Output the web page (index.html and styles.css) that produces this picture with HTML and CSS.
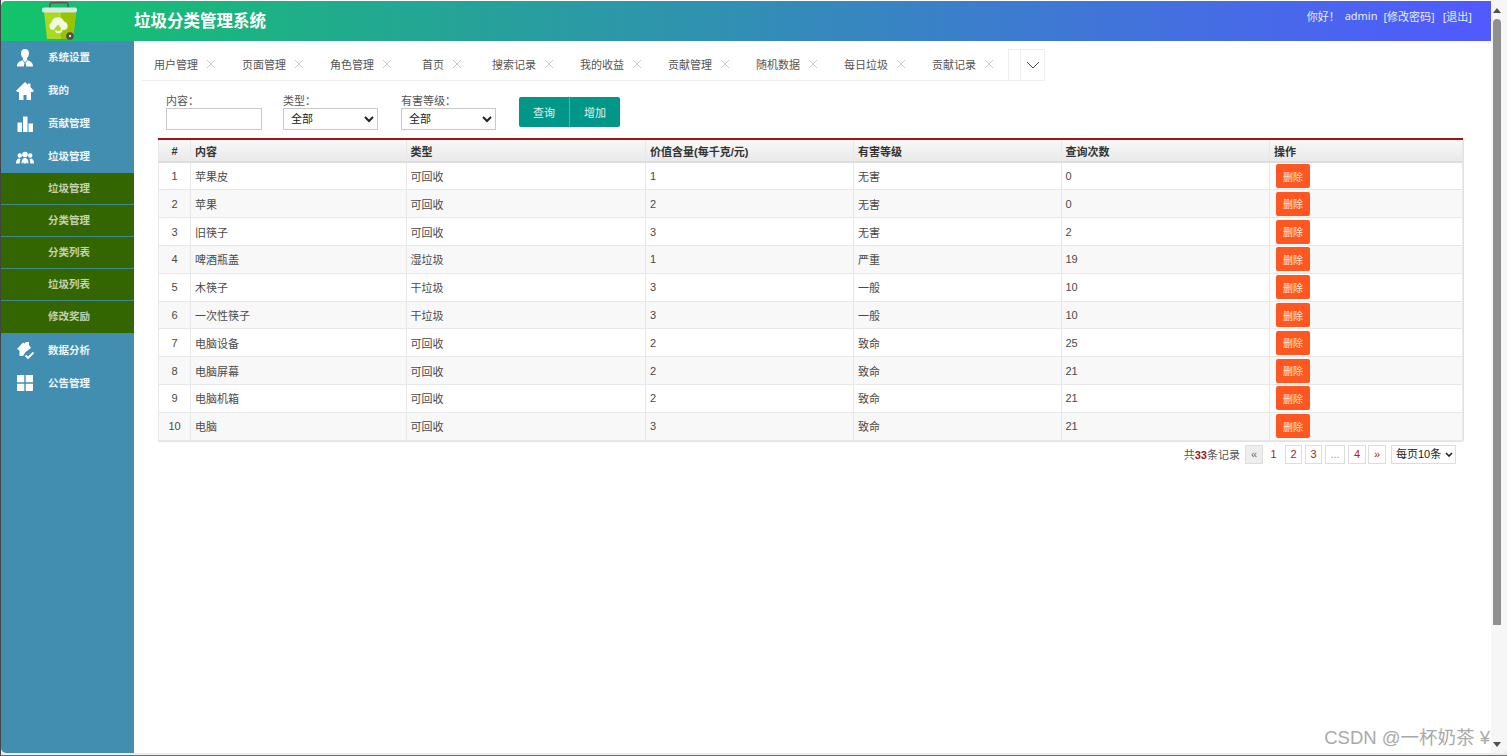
FILE: index.html
```html
<!DOCTYPE html>
<html lang="zh">
<head>
<meta charset="utf-8">
<title>垃圾分类管理系统</title>
<link rel="stylesheet" href="styles.css">
</head>
<body>
<div class="window">
  <div class="page">
    <header class="topbar">
      <div class="logo-cell">
        <svg class="logo" viewBox="0 0 40 40" width="40" height="40">
          <path d="M9 7V3.500Q9 1.800 11 1.800H25Q27 1.800 27 3.500V7" fill="none" stroke="#5d5748" stroke-width="1.500"/>
          <path d="M3 11H35L32 38H6Z" fill="#a9d920"/>
          <path d="M20 11H35L32 38H20Z" fill="#98c300"/>
          <rect x="1" y="6.500" width="35" height="5" rx="2" fill="#d6ece6"/>
          <path d="M11.500 29a4 4 0 0 1-1-7.500a6.500 6.500 0 0 1 12.500-1a4.500 4.500 0 0 1 1 8.500h-2.500l-4.500-5.500-4.500 5.500z" fill="#f2f8e2"/>
          <path d="M14.500 29.500a3.600 3.600 0 0 0 6 .5M20.500 27.500v3h-3" fill="none" stroke="#f2f8e2" stroke-width="1.700"/>
          <circle cx="29" cy="35" r="3.800" fill="#514d3f"/>
          <circle cx="29" cy="35" r="1.200" fill="#ddd"/>
        </svg>
      </div>
      <h1 class="brand">垃圾分类管理系统</h1>
      <div class="user-links"><span>你好！</span><span>admin</span><span class="link-pwd">[修改密码]</span><span class="link-exit">[退出]</span></div>
    </header>
    <div class="body-row">
      <nav class="sidebar">
        <a class="nav-item"><svg class="nav-icon" viewBox="0 0 20 20"><path d="M10 1c2.800 0 4 2 4 4.200c0 2-1 4-2.200 5l.5 1.300L10 14.500 7.700 11.500l.5-1.300C7 9.200 6 7.200 6 5.200 6 3 7.200 1 10 1z" fill="#fff"/><path d="M2 18.500c0-3.500 2-5 5.500-6.200L9.500 15l-.8 3.500zM18 18.500c0-3.500-2-5-5.500-6.200L10.500 15l.8 3.500z" fill="#fff"/></svg>系统设置</a>
        <a class="nav-item"><svg class="nav-icon" viewBox="0 0 20 20"><path d="M10 1L1 9.800l1.300 1.200H4v8h4.500v-5h3v5H16v-8h1.700L19 9.800 15.500 6.300V2.500h-2.500v1.300z" fill="#fff"/></svg>我的</a>
        <a class="nav-item"><svg class="nav-icon" viewBox="0 0 20 20"><path d="M2.500 8.500h4.500V18H2.500zM8 2.500h4.500V18H8zM13.500 9.500h4.500V18h-4.500z" fill="#fff"/></svg>贡献管理</a>
        <a class="nav-item"><svg class="nav-icon" viewBox="0 0 20 20"><circle cx="10" cy="7.500" r="2.800" fill="#fff"/><circle cx="4.800" cy="8.500" r="2.200" fill="#fff"/><circle cx="15.200" cy="8.500" r="2.200" fill="#fff"/><path d="M6.500 16.500c0-4 1.500-5.500 3.500-5.500s3.500 1.500 3.500 5.500h-1l-.5-2-.5 2h-3l-.5-2-.5 2zM1 16.500c0-3 1-5 3.500-5l1 .8q-.8 2-.8 4.200zM19 16.500c0-3-1-5-3.500-5l-1 .8q.8 2 .8 4.200z" fill="#fff"/></svg>垃圾管理</a>
        <div class="subnav">
          <a class="sub-item">垃圾管理</a>
          <a class="sub-item">分类管理</a>
          <a class="sub-item">分类列表</a>
          <a class="sub-item">垃圾列表</a>
          <a class="sub-item">修改奖励</a>
        </div>
        <a class="nav-item nav-item-low"><svg class="nav-icon" viewBox="0 0 20 20"><path d="M2 9l6-6.500 1.500 1 1.500-1.500h3v3l2 3-2 1.500-3.500 2.500-2.500 4H4.500V10.500z" fill="#fff"/><path d="M10.500 15.500l2.500 2.500 5.500-5.500" fill="none" stroke="#fff" stroke-width="1.800"/></svg>数据分析</a>
        <a class="nav-item nav-item-low"><svg class="nav-icon" viewBox="0 0 20 20"><path d="M2 2h7.300v7.300H2zM10.700 2H18v7.300h-7.300zM2 10.700h7.300V18H2zM10.700 10.700H18V18h-7.300z" fill="#fff"/></svg>公告管理</a>
      </nav>
      <main class="content">
        <div class="tabs">
          <div class="tab-list">
            <div class="tab">用户管理<span class="close"><svg viewBox="0 0 10 10" width="10" height="10"><path d="M1 1l8 8M9 1l-8 8"/></svg></span></div>
            <div class="tab">页面管理<span class="close"><svg viewBox="0 0 10 10" width="10" height="10"><path d="M1 1l8 8M9 1l-8 8"/></svg></span></div>
            <div class="tab">角色管理<span class="close"><svg viewBox="0 0 10 10" width="10" height="10"><path d="M1 1l8 8M9 1l-8 8"/></svg></span></div>
            <div class="tab tab-home">首页<span class="close"><svg viewBox="0 0 10 10" width="10" height="10"><path d="M1 1l8 8M9 1l-8 8"/></svg></span></div>
            <div class="tab">搜索记录<span class="close"><svg viewBox="0 0 10 10" width="10" height="10"><path d="M1 1l8 8M9 1l-8 8"/></svg></span></div>
            <div class="tab">我的收益<span class="close"><svg viewBox="0 0 10 10" width="10" height="10"><path d="M1 1l8 8M9 1l-8 8"/></svg></span></div>
            <div class="tab">贡献管理<span class="close"><svg viewBox="0 0 10 10" width="10" height="10"><path d="M1 1l8 8M9 1l-8 8"/></svg></span></div>
            <div class="tab">随机数据<span class="close"><svg viewBox="0 0 10 10" width="10" height="10"><path d="M1 1l8 8M9 1l-8 8"/></svg></span></div>
            <div class="tab">每日垃圾<span class="close"><svg viewBox="0 0 10 10" width="10" height="10"><path d="M1 1l8 8M9 1l-8 8"/></svg></span></div>
            <div class="tab">贡献记录<span class="close"><svg viewBox="0 0 10 10" width="10" height="10"><path d="M1 1l8 8M9 1l-8 8"/></svg></span></div>
          </div>
          <div class="tab-spacer"></div>
          <div class="tab-more"><svg viewBox="0 0 14 8" width="14" height="8"><path d="M1 1l6 6 6-6" fill="none" stroke="#444" stroke-width="1"/></svg></div>
        </div>
        <form class="filters">
          <label class="field field-first">内容：<input class="control" type="text"></label>
          <label class="field field-second">类型：<select class="control"><option>全部</option></select></label>
          <label class="field">有害等级：<select class="control"><option>全部</option></select></label>
          <div class="btn-group"><button class="btn" type="button">查询</button><button class="btn" type="button">增加</button></div>
        </form>
        <table class="grid">
          <colgroup><col class="c-num"><col class="c-name"><col class="c-type"><col class="c-value"><col class="c-level"><col class="c-count"><col></colgroup>
          <thead><tr><th class="num">#</th><th>内容</th><th>类型</th><th>价值含量(每千克/元)</th><th>有害等级</th><th>查询次数</th><th>操作</th></tr></thead>
          <tbody>
            <tr><td class="num">1</td><td>苹果皮</td><td>可回收</td><td>1</td><td>无害</td><td>0</td><td><button class="del" type="button">删除</button></td></tr>
            <tr><td class="num">2</td><td>苹果</td><td>可回收</td><td>2</td><td>无害</td><td>0</td><td><button class="del" type="button">删除</button></td></tr>
            <tr><td class="num">3</td><td>旧筷子</td><td>可回收</td><td>3</td><td>无害</td><td>2</td><td><button class="del" type="button">删除</button></td></tr>
            <tr><td class="num">4</td><td>啤酒瓶盖</td><td>湿垃圾</td><td>1</td><td>严重</td><td>19</td><td><button class="del" type="button">删除</button></td></tr>
            <tr><td class="num">5</td><td>木筷子</td><td>干垃圾</td><td>3</td><td>一般</td><td>10</td><td><button class="del" type="button">删除</button></td></tr>
            <tr><td class="num">6</td><td>一次性筷子</td><td>干垃圾</td><td>3</td><td>一般</td><td>10</td><td><button class="del" type="button">删除</button></td></tr>
            <tr><td class="num">7</td><td>电脑设备</td><td>可回收</td><td>2</td><td>致命</td><td>25</td><td><button class="del" type="button">删除</button></td></tr>
            <tr><td class="num">8</td><td>电脑屏幕</td><td>可回收</td><td>2</td><td>致命</td><td>21</td><td><button class="del" type="button">删除</button></td></tr>
            <tr><td class="num">9</td><td>电脑机箱</td><td>可回收</td><td>2</td><td>致命</td><td>21</td><td><button class="del" type="button">删除</button></td></tr>
            <tr><td class="num">10</td><td>电脑</td><td>可回收</td><td>3</td><td>致命</td><td>21</td><td><button class="del" type="button">删除</button></td></tr>
          </tbody>
        </table>
        <div class="pager">
          <span class="total">共<b>33</b>条记录</span>
          <a class="pg pg-prev">«</a>
          <a class="pg pg-current">1</a>
          <a class="pg">2</a>
          <a class="pg">3</a>
          <a class="pg pg-dots">...</a>
          <a class="pg pg-wide">4</a>
          <a class="pg pg-next">»</a>
          <span class="page-size-wrap">
            <select class="page-size"><option>每页10条</option></select>
            <svg class="page-size-arrow" viewBox="0 0 8 5" width="8" height="5"><path d="M1 1l3 3 3-3" fill="none" stroke="#222" stroke-width="1.600"/></svg>
          </span>
        </div>
      </main>
      <div class="scrollbar">
        <span class="arrow-up"></span>
        <span class="thumb"></span>
        <span class="arrow-down"></span>
      </div>
    </div>
  </div>
  <div class="watermark">CSDN @一杯奶茶 ¥</div>
</div>
</body>
</html>
```
FILE: styles.css
```css
* { box-sizing: border-box; }
html, body { margin: 0; height: 100%; overflow: hidden; background: #fff; }
body { font-family: "Liberation Sans", "Noto Sans CJK SC", sans-serif; font-size: 11px; color: #444; }
.window { position: relative; width: 1507px; height: 756px; background: #ececec; border-left: 1px solid #444; border-bottom: 1px solid #6e6e6e; }
.page { height: 753px; display: flex; flex-direction: column; background: #fff; border-radius: 5px 0 6px 5px; overflow: hidden; }
.topbar { flex: none; height: 40px; margin: 1px 16px 0 0; display: flex; align-items: center; background: linear-gradient(90deg, #12c46a 0%, #5159ff 100%); color: #fff; border-top-left-radius: 5px; }
.logo-cell { width: 133px; height: 40px; flex: none; padding-left: 40px; }
.logo { display: block; }
.brand { margin: 0; font-size: 16.500px; font-weight: 700; line-height: 40px; color: #fff; }
.user-links { margin-left: auto; margin-right: 19px; margin-top: -10px; display: flex; gap: 5px; font-family: "Noto Sans", "Noto Sans CJK SC", sans-serif; font-size: 11px; color: #e8ecff; }
.link-pwd { margin-left: 1px; }
.link-exit { margin-left: 3px; }
.body-row { flex: 1; display: flex; min-height: 0; }
.sidebar { width: 133px; flex: none; background: #418eb0; }
.nav-item { height: 33px; display: flex; align-items: center; padding: 0 0 2px 14px; font-size: 10.500px; font-weight: 700; color: #eef5f8; }
.nav-item-low { padding-bottom: 0; }
.nav-icon { width: 20px; height: 20px; margin-right: 13px; flex: none; position: relative; top: 1px; }
.nav-item-low .nav-icon { top: 0; }
.subnav { background: #336600; }
.sub-item { display: block; height: 32px; line-height: 30px; padding-left: 47px; font-size: 10.500px; font-weight: 700; color: #c3d0b4; border-bottom: 1px solid #3f8a8c; }
.sub-item:last-child { border-bottom: 0; line-height: 31px; }
.content { flex: 1; min-width: 0; padding: 6px 0 0 8px; }
.tabs { display: flex; height: 34px; width: 903px; align-items: flex-end; }
.tab-list { display: flex; height: 34px; border-bottom: 1px solid #eee; }
.tab { width: 88px; display: flex; align-items: center; padding: 1px 14px 0 12px; white-space: nowrap; color: #555; font-size: 11px; }
.tab-home { width: 74px; padding: 1px 18px 0 16px; }
.close { margin-left: 8px; width: 10px; height: 10px; display: block; }
.close svg { display: block; fill: none; stroke: #c8c8c8; stroke-width: 1; }
.tab-spacer { width: 12px; height: 32px; border: 1px solid #eee; border-right: 0; }
.tab-more { width: 25px; height: 32px; border: 1px solid #eee; display: flex; align-items: center; justify-content: center; }
.filters { display: flex; align-items: flex-start; height: 57px; padding: 13px 0 0 24px; }
.field { display: flex; flex-direction: column; width: 95px; line-height: 14px; color: #555; font-size: 11px; }
.field-first { width: 96px; margin-right: 21px; }
.field-second { margin-right: 23px; }
.control { height: 22px; width: 100%; border: 1px solid #c9c9c9; background: #fff; font: 11px "Liberation Sans", "Noto Sans CJK SC", sans-serif; color: #222; padding: 0 0 0 3px; margin: 0; border-radius: 0; }
.btn-group { display: flex; height: 30px; margin: 3px 0 0 23px; width: 101px; background: #009688; border-radius: 2px; }
.btn { flex: 1; border: 0; background: transparent; color: #e2f3f0; font: 11px "Liberation Sans", "Noto Sans CJK SC", sans-serif; padding: 0; }
.btn + .btn { border-left: 1px solid #4db6ac; }
.grid { margin-left: 16px; width: 1305px; border-collapse: collapse; table-layout: fixed; border-top: 2px solid #a51414; color: #4a4a4a; font-size: 11px; box-shadow: 1px 0 0 #e2e2e2, 0 1px 0 #e2e2e2; }
.c-num { width: 32px; } .c-name { width: 215.500px; } .c-type { width: 239.500px; } .c-value { width: 208px; } .c-level { width: 207.500px; } .c-count { width: 208.500px; }
.grid th, .grid td { border: 1px solid #e8e8e8; border-top: 0; padding: 0 4px; text-align: left; overflow: hidden; }
.grid th { height: 23.150px; font-weight: 700; color: #333; background: linear-gradient(#f8f8f8, #e9e9e9); border-bottom: 2px solid #ddd; }
.grid td { height: 27.800px; }
.grid tbody tr:nth-child(even) td { background: #f8f8f8; }
.grid .num { text-align: center; }
.del { display: block; width: 34px; height: 24px; padding: 0; border: 0; border-radius: 2px; background: #ff5722; color: #ffe3d8; font: 10px "Liberation Sans", "Noto Sans CJK SC", sans-serif; margin-left: 2px; }
.pager { display: flex; align-items: center; justify-content: flex-end; width: 1298px; margin: 4px 0 0 16px; height: 19px; gap: 3px; color: #555; font-size: 11px; }
.total { margin-right: 2px; }
.total b { color: #a51414; }
.pg { min-width: 17px; height: 19px; padding: 0 3px; border: 1px solid #ddd; text-align: center; line-height: 17px; color: #b02020; font-size: 11px; }
.pg-prev { width: 18px; background: #eee; border-color: #ddd; color: #666; }
.pg-current { border-color: transparent; width: 15px; min-width: 15px; margin-right: 1px; }
.pg-dots { width: 20px; color: #999; }
.pg-wide { width: 18px; }
.pg-next { width: 18px; margin-left: -1px; }
.page-size-wrap { position: relative; display: block; width: 65px; height: 19px; margin-left: 2px; }
.page-size { appearance: none; display: block; width: 65px; height: 19px; border: 1px solid #ddd; background: #fff; font: 11px "Liberation Sans", "Noto Sans CJK SC", sans-serif; color: #222; padding: 0 0 0 4px; border-radius: 0; }
.page-size-arrow { position: absolute; right: 3px; top: 7px; }
.scrollbar { width: 16px; flex: none; background: #f6f6f6; margin-top: -41px; display: flex; flex-direction: column; align-items: flex-start; padding-left: 2px; }
.arrow-up, .arrow-down { width: 0; height: 0; border-left: 4px solid transparent; border-right: 4px solid transparent; margin-bottom: 5px; }
.arrow-up { border-bottom: 5px solid #505050; margin-top: 8px; }
.arrow-down { border-top: 5px solid #505050; margin-top: auto; margin-bottom: 6px; }
.thumb { width: 8px; height: 606px; background: #8f8f8f; border-radius: 4px 4px 0 0; margin-top: 1px; }
.watermark { position: absolute; right: 17px; bottom: 6px; font: 18.500px "Liberation Sans", "Noto Sans CJK SC", sans-serif; color: #a9a9a9; }
```
